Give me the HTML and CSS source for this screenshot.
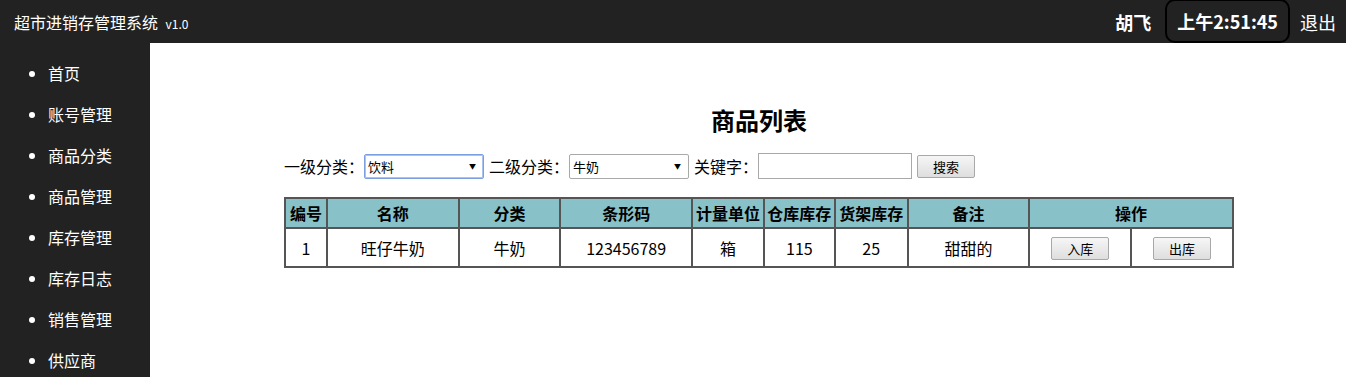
FILE: index.html
```html
<!DOCTYPE html>
<html lang="zh-CN">
<head>
    <meta charset="UTF-8">
    <title>商品列表</title>
    <link rel="stylesheet" href="styles.css">
</head>
<body>

<div class="header">
    <div class="brand">超市进销存管理系统 <small>v1.0</small></div>
    <div class="user">
        <span class="user-name">胡飞</span>
        <span class="clock">上午2:51:45</span>
        <a class="logout" href="#">退出</a>
    </div>
</div>

<div class="layout">
    <ul class="sidebar">
        <li>首页</li>
        <li>账号管理</li>
        <li>商品分类</li>
        <li>商品管理</li>
        <li>库存管理</li>
        <li>库存日志</li>
        <li>销售管理</li>
        <li>供应商</li>
    </ul>

    <div class="main">
        <div class="container">
            <h2>商品列表</h2>
            <div class="search">
                <label>一级分类：</label>
                <span class="sel-wrap">
                    <select class="sel focus">
                        <option>饮料</option>
                    </select>
                </span>
                <label>二级分类：</label>
                <span class="sel-wrap">
                    <select class="sel">
                        <option>牛奶</option>
                    </select>
                </span>
                <label>关键字：</label>
                <input type="text" class="keyword">
                <button class="btn btn-search">搜索</button>
            </div>

            <table class="goods">
                <tr>
                    <th class="c-id">编号</th>
                    <th class="c-name">名称</th>
                    <th class="c-cat">分类</th>
                    <th class="c-code">条形码</th>
                    <th class="c-unit">计量单位</th>
                    <th class="c-stock">仓库库存</th>
                    <th class="c-shelf">货架库存</th>
                    <th class="c-note">备注</th>
                    <th colspan="2">操作</th>
                </tr>
                <tr>
                    <td>1</td>
                    <td>旺仔牛奶</td>
                    <td>牛奶</td>
                    <td>123456789</td>
                    <td>箱</td>
                    <td>115</td>
                    <td>25</td>
                    <td>甜甜的</td>
                    <td class="c-op"><button class="btn">入库</button></td>
                    <td class="c-op"><button class="btn">出库</button></td>
                </tr>
            </table>
        </div>
    </div>
</div>

</body>
</html>
```

FILE: styles.css
```css
body {
    margin: 0;
    font-family: "Noto Sans CJK SC", "Open Sans", sans-serif;
    color: #000;
    background: #fff;
    overflow: hidden;
}
.header {
    height: 43px;
    background-color: #222;
    color: #fff;
    display: flex;
    justify-content: space-between;
    align-items: center;
}
.brand {
    padding-left: 14px;
    font-size: 16px;
}
.brand small {
    font-size: 12px;
    margin-left: 4px;
}
.user {
    display: flex;
    align-items: center;
    height: 100%;
    font-size: 18px;
    font-weight: bold;
}
.user-name {
    margin-right: 14px;
}
.clock {
    box-sizing: border-box;
    height: 44px;
    margin-top: -1px;
    padding: 0 10px;
    display: flex;
    align-items: center;
    border: 2px solid #000;
    border-radius: 10px;
}
.logout {
    color: #fff;
    text-decoration: none;
    font-weight: normal;
    margin: 0 10px 0 10px;
}
.layout {
    display: flex;
    height: 334px;
}
.sidebar {
    width: 150px;
    flex-shrink: 0;
    margin: 0;
    padding: 20px 0 0 48px;
    box-sizing: border-box;
    background-color: #222;
    color: #fff;
    font-size: 16px;
    line-height: 21px;
}
.sidebar li {
    margin-bottom: 20px;
}
.main {
    flex: 1;
    padding-left: 134px;
}
.container {
    width: 950px;
}
h2 {
    text-align: center;
    font-size: 24px;
    line-height: 32px;
    margin: 61px 0 17px 0;
}
.search {
    display: flex;
    align-items: center;
    font-size: 16px;
    height: 26px;
}
.sel-wrap {
    position: relative;
    margin-right: 5px;
}
.sel-wrap::after {
    content: "▼";
    position: absolute;
    right: 8px;
    top: 7px;
    font-size: 7px;
    line-height: 10px;
    pointer-events: none;
}
.sel {
    display: block;
    width: 120px;
    height: 25px;
    font-family: inherit;
    font-size: 13px;
    border: 1px solid #a9a9a9;
    border-radius: 2px;
    background: #fff;
    padding: 0 3px;
    appearance: none;
    -webkit-appearance: none;
}
.sel.focus {
    border-color: #7b9fe0;
    box-shadow: 0 0 0 1px #aac3ee inset;
}
.keyword {
    width: 154px;
    height: 26px;
    box-sizing: border-box;
    border: 1px solid #a9a9a9;
    margin-right: 5px;
}
.btn {
    height: 23px;
    width: 58px;
    font-family: inherit;
    font-size: 13px;
    padding: 0;
    border: 1px solid #a8a8a8;
    border-radius: 2px;
    background: linear-gradient(#f6f6f6, #dedede);
}
.goods {
    margin-top: 18px;
    border-collapse: collapse;
    width: 950px;
    font-size: 16px;
    text-align: center;
}
.goods th, .goods td {
    border: 2px solid #555;
    padding: 0;
}
.goods th {
    background-color: #88c1c8;
    height: 28px;
    line-height: 20px;
}
.goods td {
    height: 37px;
}
.c-id { width: 40px; }
.c-name { width: 130px; }
.c-cat { width: 100px; }
.c-code { width: 130px; }
.c-unit { width: 70px; }
.c-stock { width: 69px; }
.c-shelf { width: 71px; }
.c-note { width: 120px; }
.c-op { width: 100px; }
```
